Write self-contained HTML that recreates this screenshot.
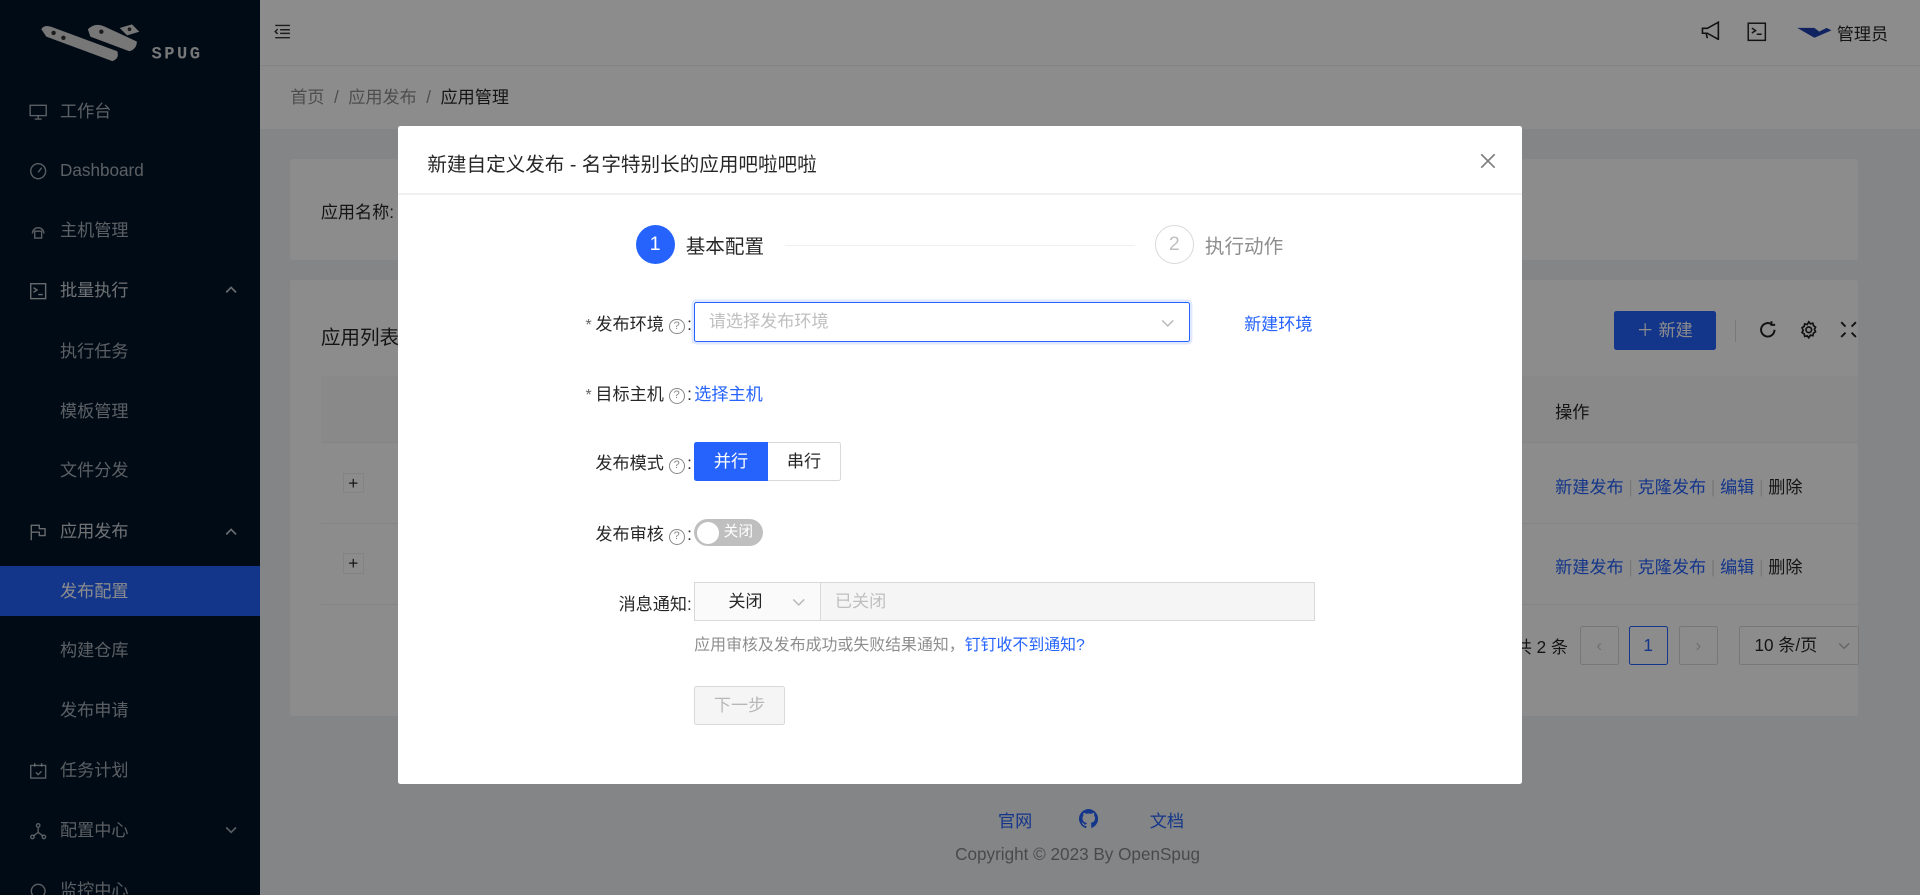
<!DOCTYPE html>
<html><head><meta charset="utf-8">
<style>
*{box-sizing:border-box;margin:0;padding:0}
html,body{width:1920px;height:895px;overflow:hidden;background:#f0f2f5}
body{font-family:"Liberation Sans","Noto Sans CJK SC",sans-serif;color:rgba(0,0,0,.85)}
#w{position:absolute;left:0;top:0;width:1568px;height:731px;zoom:1.22449;overflow:hidden;font-size:14px}
.a{position:absolute}
.side{left:0;top:0;width:212px;height:731px;background:#001529}
.mi{position:absolute;left:0;width:212px;height:40px;line-height:40px;color:rgba(255,255,255,.65);font-size:14px}
.mi .t{position:absolute;left:49px}
.mi svg{position:absolute;left:24px;top:13px}
.mi svg.ch{left:184px;top:16px}
.sel{background:#2563fc;color:#fff}
.hdr{left:212px;top:0;width:1356px;height:53px;background:#fff}
.bc{left:212px;top:53px;width:1356px;height:52px;background:#fff;border-top:1px solid #eee}
.card{background:#fff;border-radius:2px}
.lnk{color:#2563fc}
.mask{left:0;top:0;width:1568px;height:731px;background:rgba(0,0,0,.45)}
.modal{left:325px;top:103px;width:918px;height:537px;background:#fff;border-radius:2px}
.lbl{position:absolute;text-align:right;width:240px;left:0;color:rgba(0,0,0,.85)}
.q{display:inline-block;width:13px;height:13px;border:1px solid #888;border-radius:50%;font-size:9px;line-height:11px;text-align:center;color:#888;vertical-align:1px;margin:0 2px 0 4px}
.star{color:#666;font-size:13px;margin-right:3px}
</style></head><body>
<div id="w">
<div class="a side">
 <svg class="a" style="left:28px;top:14px" width="160" height="40" viewBox="0 0 160 40">
  <path d="M6 10 Q8 6 14 8 L68 28 Q70 34 64 36 L10 16 Z" fill="#d9d9d9"/>
  <path d="M44 10 Q50 4 58 8 L84 20 Q84 26 78 28 L46 16 Z" fill="#d9d9d9"/>
  <path d="M70 9 L80 6 L86 12 L76 15 Z" fill="#d9d9d9"/>
  <circle cx="16" cy="13" r="1.8" fill="#333"/><circle cx="24" cy="17" r="1.8" fill="#333"/>
  <circle cx="55" cy="12" r="1.8" fill="#333"/><circle cx="78" cy="10" r="1.5" fill="#333"/>
  <text x="96" y="34" fill="#d9d9d9" font-size="14" font-weight="bold" letter-spacing="2" font-family="Liberation Mono">SPUG</text>
 </svg>
 <div class="mi" style="top:71px"><svg width="15" height="15" viewBox="0 0 16 16" fill="none" stroke="#fff" stroke-opacity=".65" stroke-width="1.2"><rect x="1" y="2" width="14" height="9"/><path d="M8 11v3M5 14h6"/></svg><span class="t">工作台</span></div>
 <div class="mi" style="top:119px"><svg width="15" height="15" viewBox="0 0 16 16" fill="none" stroke="#fff" stroke-opacity=".65" stroke-width="1.2"><circle cx="8" cy="8" r="6.5"/><path d="M8 9l3-4"/></svg><span class="t">Dashboard</span></div>
 <div class="mi" style="top:168px"><svg width="15" height="15" viewBox="0 0 16 16" fill="none" stroke="#fff" stroke-opacity=".65" stroke-width="1.2"><path d="M3 10a5 5 0 1 1 10 0"/><rect x="5" y="8" width="6" height="6"/></svg><span class="t">主机管理</span></div>
 <div class="mi" style="top:217px;color:rgba(255,255,255,.8)"><svg width="15" height="15" viewBox="0 0 16 16" fill="none" stroke="#fff" stroke-opacity=".75" stroke-width="1.2"><rect x="1.5" y="1.5" width="13" height="13"/><path d="M4 5l3 2-3 2M8 11h4"/></svg><span class="t">批量执行</span><svg class="ch" width="10" height="8" viewBox="0 0 10 8" fill="none" stroke="#fff" stroke-opacity=".75" stroke-width="1.4"><path d="M1 6l4-4 4 4"/></svg></div>
 <div class="mi" style="top:267px"><span class="t">执行任务</span></div>
 <div class="mi" style="top:316px"><span class="t">模板管理</span></div>
 <div class="mi" style="top:364px"><span class="t">文件分发</span></div>
 <div class="mi" style="top:414px;color:rgba(255,255,255,.8)"><svg width="15" height="15" viewBox="0 0 16 16" fill="none" stroke="#fff" stroke-opacity=".75" stroke-width="1.2"><path d="M2 15V2h7v3h5v6H9V8H2"/></svg><span class="t">应用发布</span><svg class="ch" width="10" height="8" viewBox="0 0 10 8" fill="none" stroke="#fff" stroke-opacity=".75" stroke-width="1.4"><path d="M1 6l4-4 4 4"/></svg></div>
 <div class="mi sel" style="top:462px;height:41px;line-height:41px"><span class="t">发布配置</span></div>
 <div class="mi" style="top:511px"><span class="t">构建仓库</span></div>
 <div class="mi" style="top:560px"><span class="t">发布申请</span></div>
 <div class="mi" style="top:609px"><svg width="15" height="15" viewBox="0 0 16 16" fill="none" stroke="#fff" stroke-opacity=".65" stroke-width="1.2"><rect x="1.5" y="3" width="13" height="11"/><path d="M5 1v3M11 1v3M6 9l2 2 3-3"/></svg><span class="t">任务计划</span></div>
 <div class="mi" style="top:658px"><svg width="15" height="15" viewBox="0 0 16 16" fill="none" stroke="#fff" stroke-opacity=".65" stroke-width="1.2"><circle cx="8" cy="3" r="1.5"/><circle cx="3" cy="13" r="1.5"/><circle cx="13" cy="13" r="1.5"/><path d="M8 5v4M4 12l4-3 4 3"/></svg><span class="t">配置中心</span><svg class="ch" width="10" height="8" viewBox="0 0 10 8" fill="none" stroke="#fff" stroke-opacity=".65" stroke-width="1.4"><path d="M1 2l4 4 4-4"/></svg></div>
 <div class="mi" style="top:707px"><svg width="15" height="15" viewBox="0 0 16 16" fill="none" stroke="#fff" stroke-opacity=".65" stroke-width="1.2"><circle cx="8" cy="8" r="6"/></svg><span class="t">监控中心</span></div>
</div>
<div class="a hdr">
 <svg class="a" style="left:12px;top:19px" width="14" height="14" viewBox="0 0 14 14" stroke="#333" stroke-width="1.2"><path d="M1 2h12M5 5.5h8M5 8.5h8M1 12h12M3 5l-2 2 2 2" fill="none"/></svg>
 <svg class="a" style="left:1176px;top:17px" width="18" height="16" viewBox="0 0 18 16" fill="none" stroke="#222" stroke-width="1.3"><path d="M2 6h4l9-5v14l-9-5H2zM5 10l1 4"/></svg>
 <svg class="a" style="left:1215px;top:18px" width="16" height="16" viewBox="0 0 16 16" fill="none" stroke="#222" stroke-width="1.2"><rect x="1" y="1" width="14" height="14"/><path d="M4 5l3 2-3 2M8 10h4"/></svg>
 <svg class="a" style="left:1255px;top:19px" width="30" height="14" viewBox="0 0 30 14"><path d="M1 4l14 8 14-6-4-2-6 3-4-3z" fill="#1e40af"/></svg>
 <div class="a" style="left:1288px;top:16px;font-size:14px">管理员</div>
</div>
<div class="a bc"><div class="a" style="left:25px;top:14px;font-size:14px;color:rgba(0,0,0,.45)">首页 &nbsp;/&nbsp; 应用发布 &nbsp;/&nbsp; <span style="color:rgba(0,0,0,.85)">应用管理</span></div></div>
<div class="a card" style="left:237px;top:130px;width:1280px;height:82px"><div class="a" style="left:25px;top:32px">应用名称:</div></div>
<div class="a card" style="left:237px;top:229px;width:1280px;height:356px">
 <div class="a" style="left:25px;top:33px;font-size:16px">应用列表</div>
 <div class="a" style="left:1081px;top:25px;width:83px;height:32px;background:#2563fc;border-radius:2px;color:#fff;line-height:32px;text-align:center">＋ 新建</div>
 <div class="a" style="left:1180px;top:32px;width:1px;height:18px;background:#ddd"></div>
 <svg class="a" style="left:1199px;top:32px" width="16" height="16" viewBox="0 0 16 16" fill="none" stroke="#222" stroke-width="1.6"><path d="M13.5 8A5.5 5.5 0 1 1 11 3.4"/><path d="M11 1v3h3" /></svg>
 <svg class="a" style="left:1232px;top:32px" width="16" height="16" viewBox="0 0 16 16" fill="none" stroke="#222" stroke-width="1.4"><circle cx="8" cy="8" r="2.3"/><path d="M8 1.5l1.3 1.6 2-.5.5 2 1.7 1.2-.9 1.9.9 1.9-1.7 1.2-.5 2-2-.5L8 14.5l-1.3-1.6-2 .5-.5-2L2.5 10.2l.9-1.9-.9-1.9 1.7-1.2.5-2 2 .5z"/></svg>
 <svg class="a" style="left:1266px;top:33px" width="14" height="14" viewBox="0 0 14 14" fill="none" stroke="#222" stroke-width="1.6"><path d="M1 1l3.5 3.5M13 1L9.5 4.5M1 13l3.5-3.5M13 13L9.5 9.5"/></svg>
 <div class="a" style="left:25px;top:78px;width:1255px;height:55px;background:#fafafa;border-bottom:1px solid #f0f0f0"><div class="a" style="left:1008px;top:18px">操作</div></div>
 <div class="a" style="left:25px;top:133px;width:1255px;height:66px;border-bottom:1px solid #f0f0f0"></div>
 <div class="a" style="left:25px;top:199px;width:1255px;height:66px;border-bottom:1px solid #f0f0f0"></div>
 <div class="a" style="left:43px;top:157px;width:17px;height:17px;border:1px solid #eee;text-align:center;line-height:15px">+</div>
 <div class="a" style="left:43px;top:223px;width:17px;height:17px;border:1px solid #eee;text-align:center;line-height:15px">+</div>
 <div class="a" style="left:1033px;top:157px"><span class="lnk">新建发布</span> <span style="color:#ddd">|</span> <span class="lnk">克隆发布</span> <span style="color:#ddd">|</span> <span class="lnk">编辑</span> <span style="color:#ddd">|</span> 删除</div>
 <div class="a" style="left:1033px;top:223px"><span class="lnk">新建发布</span> <span style="color:#ddd">|</span> <span class="lnk">克隆发布</span> <span style="color:#ddd">|</span> <span class="lnk">编辑</span> <span style="color:#ddd">|</span> 删除</div>
 <div class="a" style="left:1000px;top:288px">共 2 条</div>
 <div class="a" style="left:1053px;top:282px;width:32px;height:32px;border:1px solid #d9d9d9;border-radius:2px;text-align:center;line-height:30px;color:#ccc">‹</div>
 <div class="a" style="left:1093px;top:282px;width:32px;height:32px;border:1px solid #2563fc;border-radius:2px;text-align:center;line-height:30px;color:#2563fc">1</div>
 <div class="a" style="left:1134px;top:282px;width:32px;height:32px;border:1px solid #d9d9d9;border-radius:2px;text-align:center;line-height:30px;color:#ccc">›</div>
 <div class="a" style="left:1183px;top:282px;width:98px;height:32px;border:1px solid #d9d9d9;border-radius:2px;line-height:30px;padding-left:12px">10 条/页<svg class="a" style="left:80px;top:12px" width="10" height="8" viewBox="0 0 10 8" fill="none" stroke="#bbb" stroke-width="1.2"><path d="M1 2l4 4 4-4"/></svg></div>
</div>
<div class="a" style="left:815px;top:659px;color:#2563fc">官网</div>
<svg class="a" style="left:881px;top:661px" width="16" height="16" viewBox="0 0 16 16"><path fill="#2563fc" d="M8 0a8 8 0 0 0-2.5 15.6c.4 0 .5-.2.5-.4v-1.5c-2.2.5-2.7-1-2.7-1-.4-.9-.9-1.2-.9-1.2-.7-.5.1-.5.1-.5.8.1 1.2.8 1.2.8.7 1.3 1.9.9 2.3.7.1-.5.3-.9.5-1.100-1.8-.2-3.6-.9-3.6-4 0-.9.3-1.6.8-2.1-.1-.2-.4-1 .1-2.1 0 0 .7-.2 2.2.8a7.5 7.5 0 0 1 4 0c1.5-1 2.2-.8 2.2-.8.4 1.1.2 1.9.1 2.1.5.6.8 1.3.8 2.1 0 3.1-1.9 3.7-3.6 3.9.3.3.5.8.5 1.5v2.2c0 .2.1.5.6.4A8 8 0 0 0 8 0z"/></svg>
<div class="a" style="left:939px;top:659px;color:#2563fc">文档</div>
<div class="a" style="left:780px;top:689px;color:rgba(0,0,0,.45);font-size:14px">Copyright © 2023 By OpenSpug</div>

<div class="a mask"></div>

<div class="a modal">
 <div class="a" style="left:24px;top:18px;font-size:16px">新建自定义发布 - 名字特别长的应用吧啦吧啦</div>
 <svg class="a" style="left:884px;top:22px" width="13" height="13" viewBox="0 0 13 13" stroke="rgba(0,0,0,.5)" stroke-width="1.4"><path d="M1 1l11 11M12 1L1 12"/></svg>
 <div class="a" style="left:0;top:55px;width:918px;height:1px;background:#f0f0f0"></div>
 <div class="a" style="left:194px;top:81px;width:32px;height:32px;border-radius:50%;background:#2563fc;color:#fff;text-align:center;line-height:32px;font-size:16px">1</div>
 <div class="a" style="left:235px;top:85px;font-size:16px">基本配置</div>
 <div class="a" style="left:316px;top:97px;width:286px;height:1px;background:#f0f0f0"></div>
 <div class="a" style="left:618px;top:81px;width:32px;height:32px;border-radius:50%;border:1px solid #d9d9d9;color:rgba(0,0,0,.25);text-align:center;line-height:30px;font-size:16px">2</div>
 <div class="a" style="left:659px;top:85px;font-size:16px;color:rgba(0,0,0,.45)">执行动作</div>

 <div class="lbl" style="top:150px"><span class="star">*</span>发布环境<span class="q">?</span>:</div>
 <div class="a" style="left:242px;top:144px;width:405px;height:32px;border:1px solid #2563fc;border-radius:2px;box-shadow:0 0 0 2px rgba(37,99,252,.15);padding-left:11px;line-height:30px;color:#bfbfbf">请选择发布环境<svg class="a" style="right:12px;top:12px" width="11" height="8" viewBox="0 0 11 8" fill="none" stroke="#bbb" stroke-width="1.2"><path d="M1 2l4.5 4.5L10 2"/></svg></div>
 <div class="a lnk" style="left:691px;top:150px">新建环境</div>

 <div class="lbl" style="top:207px"><span class="star">*</span>目标主机<span class="q">?</span>:</div>
 <div class="a lnk" style="left:242px;top:207px">选择主机</div>

 <div class="lbl" style="top:264px">发布模式<span class="q">?</span>:</div>
 <div class="a" style="left:242px;top:258px;width:60px;height:32px;background:#2563fc;color:#fff;text-align:center;line-height:32px;border-radius:2px 0 0 2px">并行</div>
 <div class="a" style="left:302px;top:258px;width:60px;height:32px;border:1px solid #d9d9d9;border-left:none;text-align:center;line-height:30px;border-radius:0 2px 2px 0">串行</div>

 <div class="lbl" style="top:322px">发布审核<span class="q">?</span>:</div>
 <div class="a" style="left:242px;top:321px;width:56px;height:22px;border-radius:11px;background:#bfbfbf"><div class="a" style="left:2px;top:2px;width:18px;height:18px;border-radius:50%;background:#fff"></div><div class="a" style="left:24px;top:3px;font-size:12px;color:#fff;line-height:16px">关闭</div></div>

 <div class="lbl" style="top:379px">消息通知:</div>
 <div class="a" style="left:242px;top:372px;width:104px;height:32px;border:1px solid #d9d9d9;background:#fafafa;line-height:30px;padding-left:27px">关闭<svg class="a" style="left:79px;top:12px" width="11" height="8" viewBox="0 0 11 8" fill="none" stroke="#bbb" stroke-width="1.2"><path d="M1 2l4.5 4.5L10 2"/></svg></div>
 <div class="a" style="left:345px;top:372px;width:404px;height:32px;border:1px solid #d9d9d9;background:#f5f5f5;line-height:30px;padding-left:11px;color:#bfbfbf">已关闭</div>
 <div class="a" style="left:242px;top:413px;font-size:13px;color:rgba(0,0,0,.45)">应用审核及发布成功或失败结果通知，<span class="lnk">钉钉收不到通知?</span></div>
 <div class="a" style="left:242px;top:457px;width:74px;height:32px;border:1px solid #d9d9d9;background:#f5f5f5;border-radius:2px;text-align:center;line-height:30px;color:rgba(0,0,0,.25)">下一步</div>
</div>
</div>
</body></html>
